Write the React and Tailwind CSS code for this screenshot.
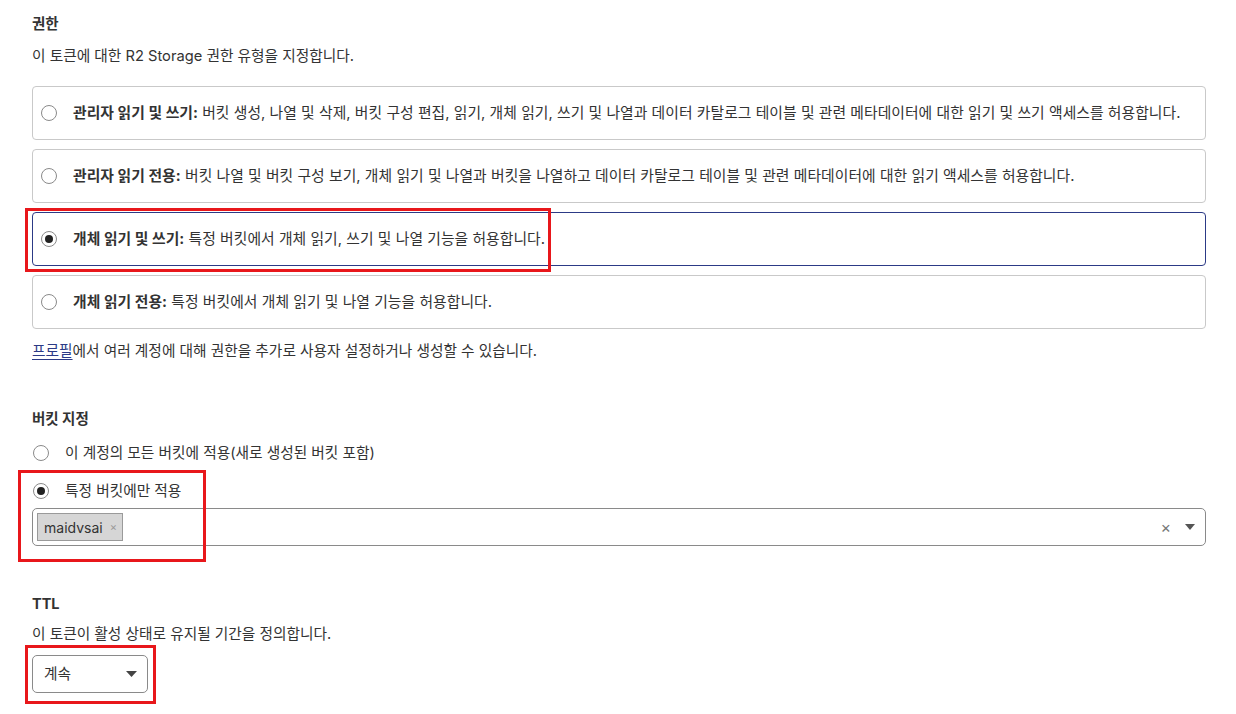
import React from "react";

const font = { fontFamily: 'Inter, "Noto Sans CJK KR", sans-serif' };

function Radio({ checked }) {
  return (
    <span className="flex h-[16px] w-[16px] shrink-0 items-center justify-center rounded-full border border-[#8a8a8a] bg-white">
      {checked && <span className="h-[8px] w-[8px] rounded-full bg-[#222]" />}
    </span>
  );
}

function Card({ title, desc, checked, annotate }) {
  return (
    <div
      className={
        "relative flex h-[54px] items-center gap-[16px] rounded-[4px] border bg-white pl-[8px] " +
        (checked ? "border-[#2c3a86]" : "border-[#c9c9c9]")
      }
    >
      <Radio checked={checked} />
      <p className="whitespace-nowrap text-[14.8px] tracking-[0.05px] text-[#333]">
        <span className="font-bold">{title}</span> {desc}
      </p>
      {annotate && (
        <span className="pointer-events-none absolute left-[-8px] top-[-5px] h-[64px] w-[526px] border-[3px] border-[#e8171b]" />
      )}
    </div>
  );
}

export default function App() {
  return (
    <div className="min-h-[714px] w-[1236px] bg-white pl-[32px] pr-[30px] pt-[14px] text-[#333]" style={font}>
      <h2 className="text-[14.5px] font-bold leading-[20px]">권한</h2>
      <p className="mt-[12px] text-[14.7px] leading-[20px]">이 토큰에 대한 R2 Storage 권한 유형을 지정합니다.</p>

      <div className="mt-[20px] flex flex-col gap-[9px]">
        <Card
          title="관리자 읽기 및 쓰기:"
          desc="버킷 생성, 나열 및 삭제, 버킷 구성 편집, 읽기, 개체 읽기, 쓰기 및 나열과 데이터 카탈로그 테이블 및 관련 메타데이터에 대한 읽기 및 쓰기 액세스를 허용합니다."
        />
        <Card
          title="관리자 읽기 전용:"
          desc="버킷 나열 및 버킷 구성 보기, 개체 읽기 및 나열과 버킷을 나열하고 데이터 카탈로그 테이블 및 관련 메타데이터에 대한 읽기 액세스를 허용합니다."
        />
        <Card title="개체 읽기 및 쓰기:" desc="특정 버킷에서 개체 읽기, 쓰기 및 나열 기능을 허용합니다." checked annotate />
        <Card title="개체 읽기 전용:" desc="특정 버킷에서 개체 읽기 및 나열 기능을 허용합니다." />
      </div>

      <p className="mt-[12px] text-[14.7px] leading-[20px]">
        <a className="text-[#2c3a86] underline underline-offset-[3px]">프로필</a>에서 여러 계정에 대해 권한을 추가로 사용자 설정하거나 생성할 수 있습니다.
      </p>

      <h2 className="mt-[48px] text-[14.5px] font-bold leading-[20px]">버킷 지정</h2>
      <div className="mt-[14px] flex items-center gap-[16px] pl-[1px]">
        <Radio />
        <span className="text-[14.7px] leading-[20px]">이 계정의 모든 버킷에 적용(새로 생성된 버킷 포함)</span>
      </div>
      <div className="relative mt-[18px] flex items-center gap-[16px] pl-[1px]">
        <Radio checked />
        <span className="text-[14.7px] leading-[20px]">특정 버킷에만 적용</span>
        <span className="pointer-events-none absolute left-[-14px] top-[-11px] h-[92px] w-[188px] border-[3px] border-[#e8171b]" />
      </div>
      <div className="mt-[7px] flex h-[38px] items-center rounded-[5px] border border-[#8a8a8a] bg-white pl-[4px] pr-[10px]">
        <span className="flex h-[28px] items-center gap-[7px] border border-[#9a9a9a] bg-[#d6d6d6] pl-[6px] pr-[5px] text-[14px]">
          maidvsai <span className="text-[11px] text-[#999]">×</span>
        </span>
        <span className="flex-1" />
        <span className="mr-[14px] text-[16px] leading-none text-[#777]">×</span>
        <svg width="10" height="6" viewBox="0 0 10 6"><path d="M0 0h10L5 6z" fill="#555" /></svg>
      </div>

      <h2 className="mt-[48px] text-[14.5px] font-bold leading-[20px]">TTL</h2>
      <p className="mt-[10px] text-[14.7px] leading-[20px]">이 토큰이 활성 상태로 유지될 기간을 정의합니다.</p>
      <div className="relative mt-[11px] w-[116px]">
        <div className="flex h-[38px] items-center justify-between rounded-[5px] border border-[#8a8a8a] bg-white pl-[11px] pr-[10px] text-[14.7px]">
          계속
          <svg width="11" height="6" viewBox="0 0 11 6"><path d="M0 0h11L5.5 6z" fill="#444" /></svg>
        </div>
        <span className="pointer-events-none absolute left-[-7px] top-[-10px] h-[59px] w-[131px] border-[3px] border-[#e8171b]" />
      </div>
    </div>
  );
}
